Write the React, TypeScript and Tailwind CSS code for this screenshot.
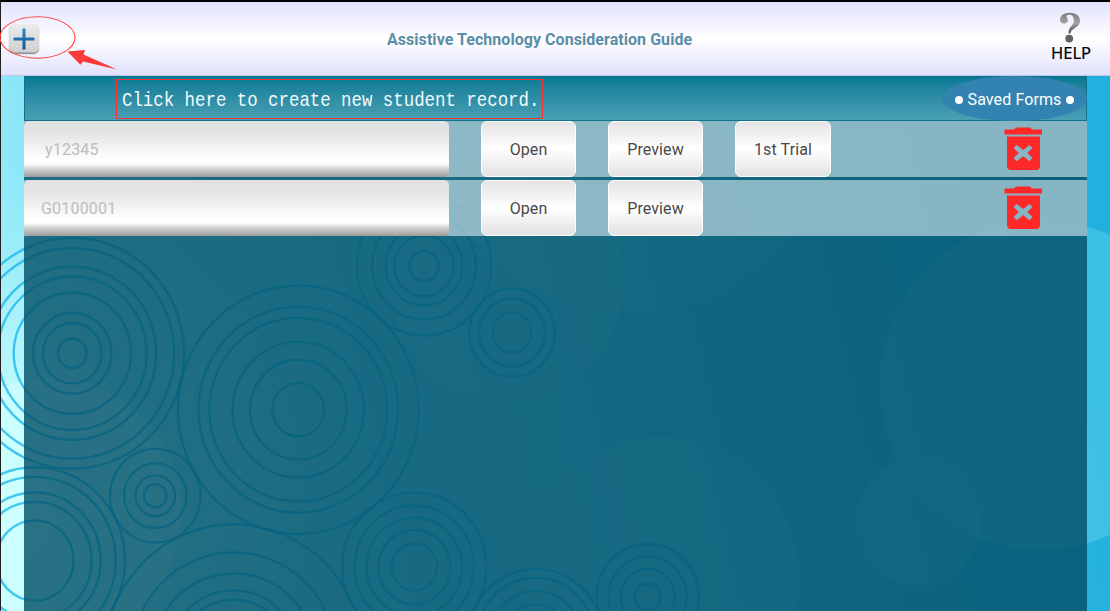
import React from "react";

type RingSet = { cx: number; cy: number; radii: number[] };

const RATIO = 1.033;

const ringSets: RingSet[] = [
  { cx: 72.3, cy: 353.3, radii: [14.3, 29.3, 39.2, 58.6, 74.3, 84, 102, 111.8] },
  { cx: 298.3, cy: 409.7, radii: [25.9, 48.3, 65.7, 89, 99.7, 120.3] },
  { cx: 155.3, cy: 495.7, radii: [11.3, 19.7, 31.3, 45.3] },
  { cx: 34.8, cy: 560.5, radii: [38.8, 56.8, 65.8, 81, 90.3] },
  { cx: 233.8, cy: 658.6, radii: [56.9, 66, 82.4, 102.8, 130] },
  { cx: 424, cy: 266, radii: [14.6, 29.5, 38.3, 51.8, 67.3] },
  { cx: 512, cy: 332.7, radii: [19.4, 33, 42.7] },
  { cx: 414.3, cy: 567, radii: [22.8, 36, 47.7, 59.6, 72] },
  { cx: 535.7, cy: 638.6, radii: [33.3, 46.2, 59, 67.5] },
  { cx: 647.7, cy: 596.7, radii: [13, 27, 39, 51] },
];

const bubbles = [
  { cx: 1042, cy: 385, rx: 162, ry: 165, o: 0.25 },
  { cx: 918, cy: 521.3, rx: 62, ry: 64.3, o: 0.24 },
  { cx: 662, cy: 579, rx: 136.6, ry: 143, o: 0.24 },
  { cx: 632, cy: 95, rx: 211, ry: 217.6, o: 0.2 },
  { cx: 506, cy: 280, rx: 118, ry: 122, o: 0.24 },
  { cx: 205, cy: 381, rx: 99, ry: 100, o: 0.18 },
  { cx: 107, cy: 225, rx: 46, ry: 47, o: 0.1 },
];

function Backdrop() {
  return (
    <svg className="absolute inset-0" width="1110" height="611" viewBox="0 0 1110 611">
      <defs>
        <linearGradient id="sky" gradientUnits="userSpaceOnUse" x1="0" y1="480" x2="1060" y2="240">
          <stop offset="0" stopColor="#a0eefa" />
          <stop offset="0.1" stopColor="#88e6f8" />
          <stop offset="0.3" stopColor="#7cdef2" />
          <stop offset="0.5" stopColor="#66d2ee" />
          <stop offset="0.75" stopColor="#40bee6" />
          <stop offset="1" stopColor="#22b0de" />
        </linearGradient>
        <radialGradient id="glow" gradientUnits="userSpaceOnUse" cx="10" cy="510" r="360">
          <stop offset="0" stopColor="#ccfffe" />
          <stop offset="0.4" stopColor="#c4fbfd" stopOpacity="0.7" />
          <stop offset="1" stopColor="#a0eef8" stopOpacity="0" />
        </radialGradient>
      </defs>
      <rect width="1110" height="611" fill="url(#sky)" />
      <rect width="1110" height="611" fill="url(#glow)" />
      <ellipse cx="50" cy="513" rx="131" ry="135" fill="#ccfffe" fillOpacity="0.85" />
      {bubbles.map((b, i) => (
        <ellipse key={i} cx={b.cx} cy={b.cy} rx={b.rx} ry={b.ry} fill="#90f0ff" fillOpacity={b.o} />
      ))}
      <g fill="none" stroke="#10b4ee" strokeOpacity="0.74" strokeWidth="2.4">
        {ringSets.map((s, i) =>
          s.radii.map((r, j) => (
            <ellipse key={`${i}-${j}`} cx={s.cx} cy={s.cy} rx={r} ry={r * RATIO} />
          ))
        )}
      </g>
    </svg>
  );
}

function PlusButton() {
  return (
    <button className="flex h-[29px] w-[30px] items-center justify-center rounded-[5px] bg-linear-to-b from-[#ececec] to-[#cfcfcf] shadow-[0_1px_1px_#888,inset_0_-1px_1px_#aaa]">
      <svg width="22" height="22" viewBox="0 0 22 22">
        <defs>
          <linearGradient id="plus" x1="0" y1="0" x2="0" y2="1">
            <stop offset="0" stopColor="#2a8ccc" />
            <stop offset="1" stopColor="#134f96" />
          </linearGradient>
        </defs>
        <path d="M9.500 .5h3v9h9v3h-9v9h-3v-9h-9v-3h9z" fill="url(#plus)" />
      </svg>
    </button>
  );
}

function HelpButton() {
  return (
    <button className="flex w-[42px] flex-col items-center">
      <svg className="-ml-[3px]" width="22" height="31" viewBox="0 0 22 31">
        <defs>
          <linearGradient id="help" x1="0" y1="0" x2="0" y2="1">
            <stop offset="0" stopColor="#7e7e7e" />
            <stop offset="0.5" stopColor="#a2a2a2" />
            <stop offset="1" stopColor="#4c4c4c" />
          </linearGradient>
        </defs>
        <path
          d="M1 8.200C1 3.600 5 .8 10.600.8 17 .8 21 4 21 8.800c0 3.600-2.400 5.700-5.300 7.400-2.800 1.700-4 2.700-4.300 5.300H9.500c-.1-3.600.9-5.400 2.900-7.500 1.700-1.800 2.500-3.200 2.500-5.600 0-3.700-1.700-5.700-4.600-5.700-1.700 0-2.800.7-2.800 1.700 0 1.200 1.400 1.600 1.400 3.800 0 1.900-1.500 3.200-3.600 3.200C2.600 11.400 1 10.200 1 8.200z"
          fill="url(#help)"
        />
        <circle cx="10.2" cy="26.600" r="3.900" fill="#606060" />
      </svg>
      <span className="mb-[2px] font-['Noto_Sans',sans-serif] text-[16.500px] leading-[20px] text-black [-webkit-text-stroke:0.2px_black]">
        HELP
      </span>
    </button>
  );
}

function TrashIcon() {
  return (
    <svg width="38" height="44" viewBox="0 0 38 44">
      <path
        fill="#ff2828"
        d="M.500 2.500H10l2-2h14l2 2h10v5H.500zM3 9.500h33v29.500q0 4-4 4H7q-4 0-4-4zM12.600 18l-3 3 5.300 5-5.300 5 3 3.200 6.700-4.900 6.200 4.900 3-3.200-5.200-5 5.200-5-3-3-6.200 4.900z"
      />
    </svg>
  );
}

function ActionButton({ label }: { label: string }) {
  return (
    <button className="h-14 w-[95px] rounded-[6px] border border-white bg-linear-to-b from-[#e4e4e4] via-white to-[#e2e2e2] pt-[2px] text-[16px] tracking-[0.1px] text-[#484848] nth-3:w-24">
      {label}
    </button>
  );
}

function RecordRow({ name, actions, indent }: { name: string; actions: string[]; indent: string }) {
  return (
    <div className="flex h-14 items-center bg-[#f2fbff]/54">
      <div
        className={`flex h-14 w-[425px] items-center rounded-[5px] bg-[linear-gradient(to_bottom,#e1e1e1_0%,#e4e4e4_20%,#ffffff_70%,#fdfdfd_77%,#d8d8d8_84%,#9b9b9b_100%)] pt-[2px] text-[16px] tracking-[0.2px] text-[#bdbdbd] ${indent}`}
      >
        {name}
      </div>
      <div className="ml-8 flex gap-8">
        {actions.map((a) => (
          <ActionButton key={a} label={a} />
        ))}
      </div>
      <button className="mr-[45.500px] ml-auto">
        <TrashIcon />
      </button>
    </div>
  );
}

export default function App() {
  return (
    <div className="relative h-[611px] w-[1110px] overflow-hidden font-[Roboto,sans-serif]">
      <Backdrop />
      <div className="relative flex h-full flex-col border-t-2 border-l border-t-black border-l-[#202020]">
        <header className="flex h-[74px] shrink-0 items-center border-b border-[#b9c8e4] bg-linear-to-b from-[#e1e1fd] via-white to-[#e1e1fd] pr-[18px] pl-2">
          <PlusButton />
          <h1 className="ml-[348px] pt-[2px] text-[16px] font-bold tracking-[0.05px] whitespace-nowrap text-[#5a8ea8]">
            Assistive Technology Consideration Guide
          </h1>
          <div className="ml-auto">
            <HelpButton />
          </div>
        </header>
        <main className="mr-[23px] ml-[23px] flex flex-1 flex-col bg-[rgba(2,80,104,0.81)]">
          <div className="flex h-[45px] items-center border border-[#10728a] bg-linear-to-b from-[#067a95] to-[#48a0b5]">
            <div className="ml-[91px] flex h-10 w-[427px] items-center border border-[#ff3030] pt-[5px] pl-[5px] text-[#f0fafc]">
              <span className="origin-left scale-x-[0.828] font-['Liberation_Mono',monospace] text-[21px] whitespace-nowrap">
                Click here to create new student record.
              </span>
            </div>
            <div className="-mr-px ml-auto flex h-[45px] w-[145px] items-center justify-center gap-[5px] rounded-[50%] bg-[#3383b2] pt-[2px] text-[16px] tracking-[0.1px] text-white">
              <span className="h-2 w-2 rounded-full bg-white" />
              <span>Saved Forms</span>
              <span className="h-2 w-2 rounded-full bg-white" />
            </div>
          </div>
          <div className="flex flex-col gap-[3px]">
            <RecordRow name="y12345" actions={["Open", "Preview", "1st Trial"]} indent="pl-[21px]" />
            <RecordRow name="G0100001" actions={["Open", "Preview"]} indent="pl-[17px]" />
          </div>
        </main>
      </div>
      <svg className="pointer-events-none absolute top-0 left-0" width="130" height="80" viewBox="0 0 130 80">
        <ellipse cx="37.500" cy="37.500" rx="37.500" ry="20.700" fill="none" stroke="#f44" strokeWidth="1.100" />
        <path d="M67.500 51.500L85 50l-1.500 4.500L117 69.600l-34-8.200-2.700 3.400z" fill="#fa3a38" />
      </svg>
    </div>
  );
}
